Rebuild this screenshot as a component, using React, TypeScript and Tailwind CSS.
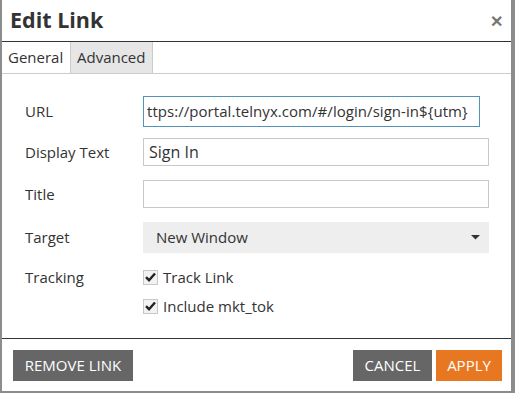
import React from "react";

function Check() {
  return (
    <span className="w-[15px] h-[15px] border border-[#c8c8c8] bg-[#f2f2f2] flex items-center justify-center">
      <svg width="11" height="10" viewBox="0 0 11 10">
        <path d="M1 5.2 L4 8.2 L10 1.5" fill="none" stroke="#222" strokeWidth="2.4" strokeLinejoin="miter" />
      </svg>
    </span>
  );
}

export default function App() {
  return (
    <div
      className="w-[515px] h-[393px] bg-white border-l-2 border-r-4 border-b-2 border-[#8c8c8c] flex flex-col text-[#333]"
      style={{ fontFamily: "'Open Sans', 'Liberation Sans', sans-serif" }}
    >
      <div className="h-[42px] border-b border-[#333] flex items-center justify-between pl-[8px] pr-[8px] shrink-0">
        <span className="text-[21.5px] font-bold text-[#333] leading-none mt-[-1px]">Edit Link</span>
        <span className="text-[#777] text-[16px] font-bold leading-none">✕</span>
      </div>
      <div className="h-[32px] border-b border-[#ccc] flex shrink-0">
        <div className="w-[68px] flex items-center pl-[6px] text-[15px] bg-white">General</div>
        <div className="w-[83px] flex items-center pl-[6px] text-[15px] bg-[#e6e6e6] border-l border-r border-[#ccc]">Advanced</div>
      </div>
      <div className="flex flex-col pl-[23px] text-[15px]">
        <div className="flex items-center mt-[22px] h-[31px]">
          <div className="w-[118px]">URL</div>
          <div className="w-[337px] h-[31px] border border-[#4f94b8] flex items-center pl-[3px] overflow-hidden whitespace-nowrap text-[15px] tracking-[0.05px]">
            ttps://portal.telnyx.com/#/login/sign-in{"${utm}"}
          </div>
        </div>
        <div className="flex items-center mt-[11px] h-[28px]">
          <div className="w-[118px]">Display Text</div>
          <div className="w-[346px] h-[28px] border border-[#c8c8c8] flex items-center pl-[5px] text-[16px]">Sign In</div>
        </div>
        <div className="flex items-center mt-[14px] h-[28px]">
          <div className="w-[118px]">Title</div>
          <div className="w-[346px] h-[28px] border border-[#c8c8c8]"></div>
        </div>
        <div className="flex items-center mt-[14px] h-[31px]">
          <div className="w-[118px]">Target</div>
          <div className="w-[346px] h-[31px] bg-[#eeeeee] flex items-center justify-between pl-[13px] pr-[9px]">
            <span>New Window</span>
            <svg width="9" height="5" viewBox="0 0 9 5"><path d="M0 0 H9 L4.5 4.5 Z" fill="#333" /></svg>
          </div>
        </div>
        <div className="flex items-center mt-[13px] h-[22px]">
          <div className="w-[118px]">Tracking</div>
          <div className="flex items-center gap-[5px]">
            <Check />
            <span>Track Link</span>
          </div>
        </div>
        <div className="flex items-center mt-[7px] h-[22px]">
          <div className="w-[118px]"></div>
          <div className="flex items-center gap-[5px]">
            <Check />
            <span>Include mkt_tok</span>
          </div>
        </div>
      </div>
      <div className="mt-auto border-t border-[#333] h-[53px] flex items-start justify-between pl-[11px] pr-[9px] pt-[11px] text-[15px] text-white">
        <div className="h-[31px] w-[120px] bg-[#666] flex items-center justify-center">REMOVE LINK</div>
        <div className="flex gap-[4px]">
          <div className="h-[31px] w-[79px] bg-[#666] flex items-center justify-center">CANCEL</div>
          <div className="h-[31px] w-[66px] bg-[#e87722] flex items-center justify-center">APPLY</div>
        </div>
      </div>
    </div>
  );
}
